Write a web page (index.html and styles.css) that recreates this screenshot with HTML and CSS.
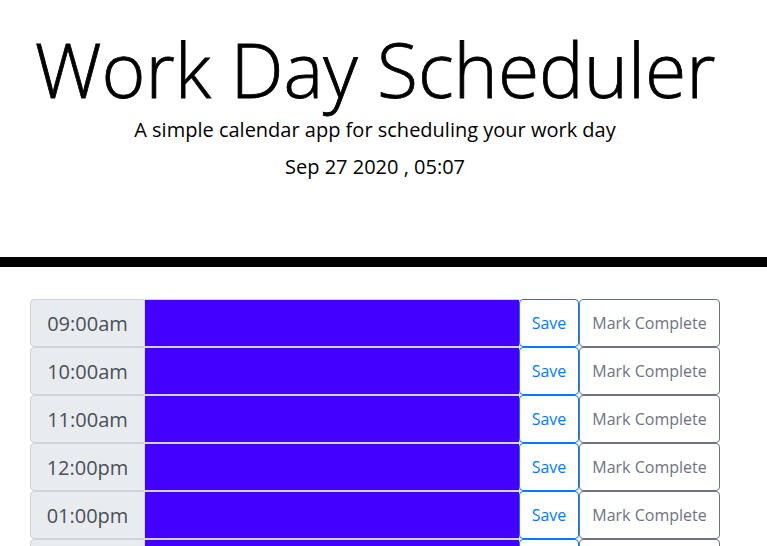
FILE: index.html
```html
<!DOCTYPE html>
<html lang="en">
<head>
<meta charset="utf-8">
<title>Work Day Scheduler</title>
<link rel="stylesheet" href="styles.css">
</head>
<body>
<header class="jumbotron">
  <h1 class="title">Work Day Scheduler</h1>
  <p class="lead">A simple calendar app for scheduling your work day</p>
  <p class="date">Sep 27 2020 , 05:07</p>
</header>
<main class="container">
  <div class="slot"><div class="hour">09:00am</div><textarea class="task"></textarea><button class="btn save">Save</button><button class="btn complete">Mark Complete</button></div>
  <div class="slot"><div class="hour">10:00am</div><textarea class="task"></textarea><button class="btn save">Save</button><button class="btn complete">Mark Complete</button></div>
  <div class="slot"><div class="hour">11:00am</div><textarea class="task"></textarea><button class="btn save">Save</button><button class="btn complete">Mark Complete</button></div>
  <div class="slot"><div class="hour">12:00pm</div><textarea class="task"></textarea><button class="btn save">Save</button><button class="btn complete">Mark Complete</button></div>
  <div class="slot"><div class="hour">01:00pm</div><textarea class="task"></textarea><button class="btn save">Save</button><button class="btn complete">Mark Complete</button></div>
  <div class="slot"><div class="hour">02:00pm</div><textarea class="task"></textarea><button class="btn save">Save</button><button class="btn complete">Mark Complete</button></div>
</main>
</body>
</html>
```
FILE: styles.css
```css
html, body {
  margin: 0;
  padding: 0;
  background: #fff;
  font-family: "Open Sans", "Noto Sans", sans-serif;
  color: #000;
  overflow: hidden;
}
.jumbotron {
  width: 100%;
  height: 267px;
  box-sizing: border-box;
  padding: 24px 17px 0 0;
  text-align: center;
  border-bottom: 10px solid #000;
}
.title {
  margin: 0;
  font-size: 75px;
  font-weight: 300;
  line-height: 90px;
  -webkit-text-stroke: 0.8px #000;
}
.lead {
  margin: 1px 0 0;
  font-size: 20px;
  line-height: 30px;
  font-weight: 400;
}
.date {
  margin: 7px 0 0;
  font-size: 20px;
  line-height: 30px;
}
.container {
  width: 690px;
  margin: 32px 0 0 30px;
}
.slot {
  display: flex;
  height: 48px;
}
.hour {
  box-sizing: border-box;
  width: 115px;
  display: flex;
  align-items: center;
  justify-content: center;
  background: #e9ecef;
  border: 1px solid #ced4da;
  border-radius: 4px 0 0 4px;
  font-size: 20px;
  color: #495057;
}
.task {
  box-sizing: border-box;
  width: 374px;
  height: 48px;
  margin: 0;
  padding: 0;
  resize: none;
  background: #4400ff;
  border: 1px solid #ced4da;
  border-left: none;
  border-right: none;
  outline: none;
}
.btn {
  box-sizing: border-box;
  height: 48px;
  margin: 0;
  padding: 0;
  background: #fff;
  font-family: "Open Sans", "Noto Sans", sans-serif;
  font-size: 16px;
  cursor: pointer;
}
.save {
  width: 60px;
  border: 1px solid #007bff;
  color: #007bff;
  border-radius: 4px;
}
.complete {
  width: 141px;
  border: 1px solid #6c757d;
  color: #6c757d;
  border-radius: 4px;
}
```
